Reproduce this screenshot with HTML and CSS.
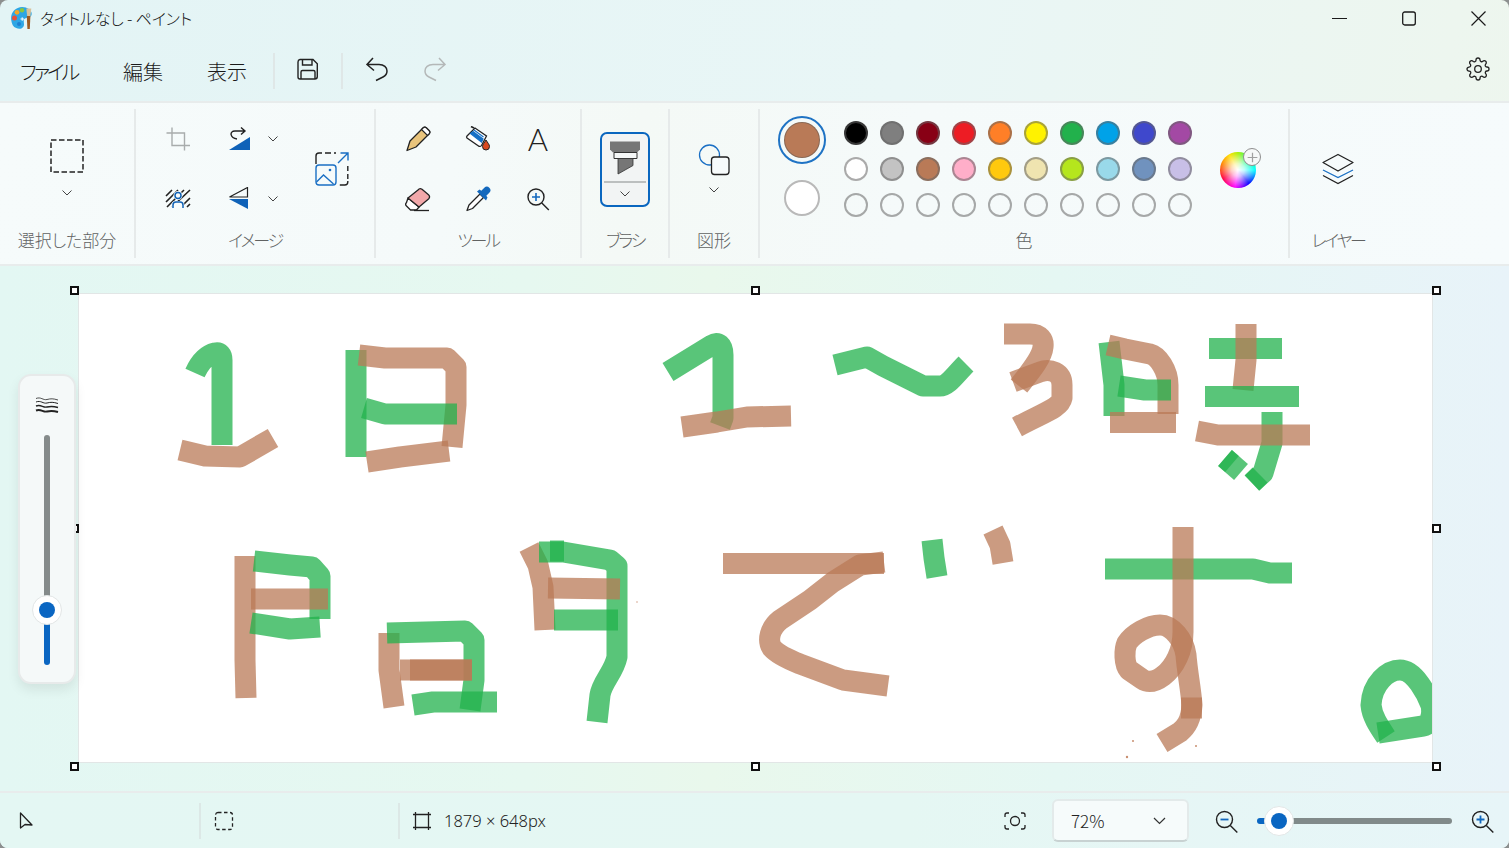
FILE: index.html
```html
<!DOCTYPE html>
<html lang="ja">
<head>
<meta charset="utf-8">
<title>タイトルなし - ペイント</title>
<link rel="stylesheet" href="styles.css">
</head>
<body>
<div class="app">
  <header class="titlebar">
    <svg class="logo" width="22" height="22" viewBox="11 7 22 22">
      <path d="M11.200 20c-1-7 4-13 11-13 5 0 9.500 3 9.500 7 0 4-5.500 3-7.500 5-1.500 2 1 5-1 8-2 2.500-5 2-7 1-3-1-4.500-4-5-8z" fill="#2ea6e4"/>
      <circle cx="14.500" cy="18" r="2.500" fill="#e6503a"/>
      <circle cx="17" cy="12.300" r="2.400" fill="#f6a623"/>
      <circle cx="22" cy="10.300" r="2.200" fill="#8cc63f"/>
      <circle cx="19" cy="24" r="2" fill="#1f7fd0"/>
      <path d="M20.500 19h3.500M22.200 17.300v3.500" stroke="#fff" stroke-width="1"/>
      <path d="M26.800 16h3.600l-.6 13h-2.400z" fill="#9c5a22"/>
      <path d="M26.300 8.500h5l-.9 7.500h-3.200z" fill="#d9c19a"/>
    </svg>
    <span class="title">タイトルなし - ペイント</span>
    <div class="win">
      <svg width="15" height="15" viewBox="0 0 15 15"><path d="M0 7.500h15" stroke="#1a1a1a" stroke-width="1.100"/></svg>
      <svg width="14" height="15" viewBox="0 0 14 15"><rect x=".7" y="1" width="12.600" height="13" rx="2" fill="none" stroke="#1a1a1a" stroke-width="1.300"/></svg>
      <svg width="15" height="15" viewBox="0 0 15 15"><path d="M.5.500l14 14M14.500.500l-14 14" stroke="#1a1a1a" stroke-width="1.200"/></svg>
    </div>
  </header>

  <nav class="menubar">
    <span class="menu m1">ファイル</span>
    <span class="menu m2">編集</span>
    <span class="menu m3">表示</span>
    <i class="vsep s1"></i>
    <svg class="save" width="22" height="22" viewBox="297 58 22 22" fill="none" stroke="#222" stroke-width="1.400"><path d="M300 59.500h13l4.300 4.300v12.700a2.500 2.500 0 0 1-2.500 2.500h-14.800a2 2 0 0 1-2-2v-15a2.500 2.500 0 0 1 2-2.500z"/><path d="M302.500 59.500v5.500h9.500v-5.500M301 79v-7a1.500 1.500 0 0 1 1.500-1.500h11a1.500 1.500 0 0 1 1.500 1.500v7"/></svg>
    <i class="vsep s2"></i>
    <svg class="undo" width="24" height="26" viewBox="365 56 24 26" fill="none" stroke="#222" stroke-width="1.500"><path d="M373 58l-6 6.500 7 6M367 64.500h12c5 0 8 3 8 6.500 0 3-2 5-4 6l-7 3.500"/></svg>
    <svg class="redo" width="24" height="26" viewBox="424 56 24 26" fill="none" stroke="#b4b8b8" stroke-width="1.500"><path d="M439 58l6 6.500-7 6M445 64.500h-12c-5 0-8 3-8 6.500 0 3 2 5 4 6l7 3.500"/></svg>
    <svg class="gear" width="24" height="24" viewBox="0 0 24 24" fill="none" stroke="#222" stroke-width="1.300"><circle cx="12" cy="12" r="3.300"/><path d="M19.400 15a1.650 1.650 0 0 0 .33 1.820l.06.06a2 2 0 0 1 0 2.830 2 2 0 0 1-2.830 0l-.06-.06a1.650 1.650 0 0 0-1.820-.33 1.650 1.650 0 0 0-1 1.510V21a2 2 0 0 1-2 2 2 2 0 0 1-2-2v-.09A1.650 1.650 0 0 0 9 19.400a1.650 1.650 0 0 0-1.820.33l-.06.06a2 2 0 0 1-2.830 0 2 2 0 0 1 0-2.830l.06-.06a1.650 1.650 0 0 0 .33-1.820 1.650 1.650 0 0 0-1.510-1H3a2 2 0 0 1-2-2 2 2 0 0 1 2-2h.09A1.650 1.650 0 0 0 4.600 9a1.650 1.650 0 0 0-.33-1.820l-.06-.06a2 2 0 0 1 0-2.830 2 2 0 0 1 2.830 0l.06.06a1.650 1.650 0 0 0 1.820.33H9a1.650 1.650 0 0 0 1-1.510V3a2 2 0 0 1 2-2 2 2 0 0 1 2 2v.09a1.650 1.650 0 0 0 1 1.510 1.650 1.650 0 0 0 1.820-.33l.06-.06a2 2 0 0 1 2.830 0 2 2 0 0 1 0 2.830l-.06.06a1.650 1.650 0 0 0-.33 1.820V9a1.650 1.650 0 0 0 1.510 1H21a2 2 0 0 1 2 2 2 2 0 0 1-2 2h-.09a1.650 1.650 0 0 0-1.510 1z"/></svg>
  </nav>

  <section class="ribbon">
    <div class="group g1">
      <div class="gbody col col-sel">
        <svg width="34" height="34" viewBox="50 139 34 34"><rect x="51" y="140" width="32" height="32" fill="none" stroke="#222" stroke-width="1.500" stroke-dasharray="5.500 2.500"/></svg>
        <svg class="chev chev-sel" width="10" height="6" viewBox="0 0 10 6"><path d="M.5.500L5 5 9.500.500" fill="none" stroke="#444" stroke-width="1"/></svg>
      </div>
      <div class="label">選択した部分</div>
    </div>

    <div class="group g2">
      <div class="gbody grid-img">
        <div class="cell">
          <svg width="24" height="24" viewBox="166 127 24 24" fill="none" stroke="#a8acac" stroke-width="1.400"><path d="M172 127.500V145.500H190M166.500 133H184.500V150.500"/></svg>
        </div>
        <div class="cell cell-b">
          <svg width="24" height="24" viewBox="229 127 24 24"><path d="M230 150h21v-13z" fill="#0f62b8"/><path d="M238 139c-7-1-8-8-2-8h10M242 127.500l4 3.500-4 3.500" fill="none" stroke="#222" stroke-width="1.400"/></svg>
          <svg class="chev chev-side" width="10" height="6" viewBox="0 0 10 6"><path d="M.5.500L5 5 9.500.500" fill="none" stroke="#444" stroke-width="1"/></svg>
        </div>
        <div class="cell cell-c">
          <svg width="34" height="34" viewBox="315 152 34 34" fill="none"><path d="M316 164v-8a3 3 0 0 1 3-3h3M325 153h6M334 153h2M347.800 166v5M347.800 174v5M347.800 181v1a3 3 0 0 1-3 3h-5" stroke="#222" stroke-width="1.400"/><path d="M338 163l10-10M340.500 153h7.500v7.500" stroke="#1a6fc4" stroke-width="1.400"/><rect x="316" y="165" width="20" height="20" rx="3" stroke="#1a6fc4" stroke-width="1.400"/><path d="M316.500 182l7-7 10 9" stroke="#1a6fc4" stroke-width="1.400"/><circle cx="330" cy="170" r="1.300" fill="#1a6fc4"/></svg>
        </div>
        <div class="cell">
          <svg width="26" height="20" viewBox="165 189 26 20" fill="none"><path d="M166 196l6-6M166 202l12-12M167 207l17-17M172 207l18-17M181 207l9-9M187 207l3-3" stroke="#222" stroke-width="1.600"/><circle cx="178" cy="195.500" r="4.500" fill="#f7fbfb"/><path d="M171.500 208v-3a4 4 0 0 1 4-4h5a4 4 0 0 1 4 4v3z" fill="#f7fbfb"/><circle cx="178" cy="195.500" r="3" fill="none" stroke="#1162b5" stroke-width="1.500"/><path d="M173 208v-3a3 3 0 0 1 3-3h4a3 3 0 0 1 3 3v3" fill="none" stroke="#1162b5" stroke-width="1.500"/></svg>
        </div>
        <div class="cell cell-b">
          <svg width="24" height="24" viewBox="229 187 24 24"><path d="M230.500 197l18-9.500V197z" fill="none" stroke="#222" stroke-width="1.200"/><path d="M230 199h19v10z" fill="#0f62b8"/></svg>
          <svg class="chev chev-side" width="10" height="6" viewBox="0 0 10 6"><path d="M.5.500L5 5 9.500.500" fill="none" stroke="#444" stroke-width="1"/></svg>
        </div>
      </div>
      <div class="label kana">イメージ</div>
    </div>

    <div class="group g3">
      <div class="gbody grid-tools">
        <div class="cell">
          <svg width="26" height="26" viewBox="405 126 26 26"><path d="M407 150.500l3-9.500 13-13a2.500 2.500 0 0 1 3.500 0l2.500 2.500a2.500 2.500 0 0 1 0 3.500l-13 13z" fill="#e9c47c" stroke="#222" stroke-width="1.300" stroke-linejoin="round"/><path d="M423 128a2.500 2.500 0 0 1 3.500 0l2.500 2.500a2.500 2.500 0 0 1 0 3.500l-1.500 1.500-6-6z" fill="#fff" stroke="#222" stroke-width="1.200"/></svg>
        </div>
        <div class="cell">
          <svg width="26" height="26" viewBox="465 126 26 26"><path d="M467 136l8-8 11.500 8-5 9.500a2 2 0 0 1-3 .5l-11.500-8a1.500 1.500 0 0 1 0-2z" fill="#fff" stroke="#222" stroke-width="1.300"/><path d="M470.500 133.500l11 8.500 1.500-3-10-7.500zM474 130l9.500 7" fill="#1770c6" stroke="#1770c6" stroke-width="1.200"/><path d="M474 128l-3-1.500" stroke="#222" stroke-width="1.600"/><path d="M486 140c-1.800 3-3.500 4.500-3.500 6.500a3.500 3.500 0 0 0 7 0c0-2-1.700-3.500-3.500-6.500z" fill="#d8481f" stroke="#222" stroke-width="1"/></svg>
        </div>
        <div class="cell"><span class="letter">A</span></div>
        <div class="cell">
          <svg width="26" height="26" viewBox="405 186 26 26"><path d="M408 198l11 9-2.500 3h-6l-4-4a2.500 2.500 0 0 1 0-3.500z" fill="#fff" stroke="#222" stroke-width="1.300" stroke-linejoin="round"/><path d="M418 190a3 3 0 0 1 4-.8l6.500 5.500a3 3 0 0 1 .3 4L419 207l-11-9z" fill="#f2a8aa" stroke="#222" stroke-width="1.300" stroke-linejoin="round"/><path d="M414 210.500h15" stroke="#222" stroke-width="1.300"/></svg>
        </div>
        <div class="cell">
          <svg width="26" height="26" viewBox="465 186 26 26"><path d="M480 194l-11 11-2 5.500 5.500-2 11-11z" fill="#fff" stroke="#222" stroke-width="1.300" stroke-linejoin="round"/><path d="M477 191.500l9 9 1.500-3-1.200-1.800 3-3a3.500 3.500 0 0 0-5-5l-3 3-1.800-1.200z" fill="#1368bd"/></svg>
        </div>
        <div class="cell">
          <svg width="26" height="26" viewBox="525 186 26 26" fill="none"><circle cx="536" cy="197" r="8" stroke="#222" stroke-width="1.400"/><path d="M532 197h8M536 193v8" stroke="#1368bd" stroke-width="1.600"/><path d="M541.800 203l7 7" stroke="#222" stroke-width="1.400"/></svg>
        </div>
      </div>
      <div class="label kana">ツール</div>
    </div>

    <div class="group g4">
      <div class="gbody col col-brush">
        <div class="brushbtn">
          <svg width="32" height="36" viewBox="608 141 32 36"><path d="M609 141.500h30v8l-3 3h-24l-3-3z" fill="#767676"/><path d="M613 152.500h23v6h-23z" fill="#f5f7f7" stroke="#333" stroke-width="1"/><path d="M617 158.500h15v7l-15 8.500z" fill="#767676" stroke="#333" stroke-width=".8"/></svg>
          <i class="brushline"></i>
          <svg class="chev chev-brush" width="10" height="6" viewBox="0 0 10 6"><path d="M.5.500L5 5 9.500.500" fill="none" stroke="#444" stroke-width="1"/></svg>
        </div>
      </div>
      <div class="label kana">ブラシ</div>
    </div>

    <div class="group g5">
      <div class="gbody col col-shape">
        <svg width="32" height="32" viewBox="698 144 32 32" fill="none"><circle cx="709.500" cy="155" r="10" stroke="#1a6fc4" stroke-width="1.300"/><rect x="711.500" y="157" width="17.500" height="17.500" rx="3" fill="#f7fbfb" stroke="#222" stroke-width="1.300"/></svg>
        <svg class="chev chev-shape" width="10" height="6" viewBox="0 0 10 6"><path d="M.5.500L5 5 9.500.500" fill="none" stroke="#444" stroke-width="1"/></svg>
      </div>
      <div class="label">図形</div>
    </div>

    <div class="group g6">
      <div class="gbody colors">
        <div class="current">
          <div class="ring"><i class="cur-in"></i></div>
          <i class="cur-two"></i>
        </div>
        <div class="swatches">
          <i class="sw c1"></i><i class="sw c2"></i><i class="sw c3"></i><i class="sw c4"></i><i class="sw c5"></i><i class="sw c6"></i><i class="sw c7"></i><i class="sw c8"></i><i class="sw c9"></i><i class="sw c10"></i>
          <i class="sw c11"></i><i class="sw c12"></i><i class="sw c13"></i><i class="sw c14"></i><i class="sw c15"></i><i class="sw c16"></i><i class="sw c17"></i><i class="sw c18"></i><i class="sw c19"></i><i class="sw c20"></i>
          <i class="sw"></i><i class="sw"></i><i class="sw"></i><i class="sw"></i><i class="sw"></i><i class="sw"></i><i class="sw"></i><i class="sw"></i><i class="sw"></i><i class="sw"></i>
        </div>
        <div class="wheel">
          <span class="plus"><svg width="17" height="17" viewBox="0 0 17 17"><path d="M3 8.500h11M8.500 3v11" stroke="#a0a0a0" stroke-width="1.400"/></svg></span>
        </div>
      </div>
      <div class="label">色</div>
    </div>

    <div class="group g7">
      <div class="gbody col col-layer">
        <svg width="32" height="32" viewBox="1322 153 32 32" fill="none"><path d="M1338 154.500l15 8-15 8.500-15-8.500z" stroke="#222" stroke-width="1.300" stroke-linejoin="round"/><path d="M1323 170l15 7.500 15-7.500" stroke="#1a6fc4" stroke-width="1.300"/><path d="M1323 175.500l15 8 15-8" stroke="#222" stroke-width="1.300"/></svg>
      </div>
      <div class="label kana">レイヤー</div>
    </div>
  </section>

  <main class="workspace">
    <div class="canvas">
      <svg class="paint" width="1353" height="468" viewBox="79 294 1353 468">
        <g class="g"><path d="M222 445V360C222 355 220 352 215 353C207 355 200 362 195 373"/></g>
        <g class="b"><path d="M180 450L205 456L240 457L273 438"/></g>
        <g class="g"><path d="M356 350V457"/></g>
        <g class="b"><path d="M359 355L385 358H447L456 367V405L452 447"/><path d="M367 462L400 457 449 451"/></g>
        <g class="g"><path d="M364 408L385 414H457"/></g>

        <g class="g"><path d="M668 372L712 345C718 341 723 345 723 355V418L720 426"/></g>
        <g class="b"><path d="M682 427L717 422 747 417 791 416"/></g>
        <g class="g"><path d="M835 365L867 357 883 366 923 386H940C948 386 955 375 966 364"/></g>

        <g class="b"><path d="M1004 334H1030C1040 334 1044 340 1043 347C1042 358 1030 372 1019 386"/><path d="M1013 382L1040 372C1050 368 1062 372 1062 385V398C1060 408 1045 412 1017 427"/></g>
        <g class="g"><path d="M1109 342L1114 385V416"/></g>
        <g class="b"><path d="M1108 345L1125 349 1150 354C1158 356 1168 370 1168 385V414"/><path d="M1110 422.500H1176"/></g>
        <g class="g"><path d="M1119 386L1145 390H1171"/></g>

        <g class="g"><path d="M1209 348.500H1282"/></g>
        <g class="b"><path d="M1246 324V360L1243 390"/></g>
        <g class="g"><path d="M1205 396.500H1299"/><path d="M1272 412V443L1263 473 1252 483"/><path d="M1252 483L1260 475"/><path d="M1225 458L1241 472"/><path d="M1225 458L1232 464"/></g>
        <g class="b"><path d="M1197 431L1218 435H1310"/></g>

        <g class="b"><path d="M245 556V660L246 698"/></g>
        <g class="g"><path d="M254 561L290 565 312 567 320 576V619"/><path d="M251 623L290 629 320 627"/></g>
        <g class="b"><path d="M251 599H328"/></g>

        <g class="b"><path d="M389 633V670L394 707"/></g>
        <g class="g"><path d="M387 633L465 631 474 640V680L470 710"/><path d="M413 705L433 702H497"/></g>
        <g class="b"><path d="M400 670H472"/><path d="M410 670H472"/></g>

        <g class="b"><path d="M529 547L538 565 543 587 545 630"/></g>
        <g class="g"><path d="M539 552H563L610 560 617 566V657C614 672 602 682 600 695L597 722"/><path d="M550 551H564"/><path d="M554 620H618"/></g>
        <g class="b"><path d="M548 588L620 589"/></g>

        <g class="b"><path d="M723 563.500H884"/><path d="M884 562L860 565 833 582 810 600 780 620C770 628 767 640 772 648C778 655 790 660 800 664L843 680 888 686"/></g>
        <g class="g"><path d="M932 540L934 558 937 577"/></g>
        <g class="b"><path d="M993 530L1000 545 1003 563"/></g>

        <g class="g"><path d="M1105 569H1253L1270 573H1292"/></g>
        <g class="b"><path d="M1183 527V632C1183 650 1175 667 1163 676C1155 682 1148 683 1142 679L1129 670C1124 664 1124 650 1127 643C1133 634 1148 625 1160 625"/><path d="M1160 625C1172 625 1184 640 1186 655C1187 670 1191 690 1192 705C1191 722 1185 728 1180 732L1162 743"/><path d="M1181 708H1202"/></g>

        <g class="g"><path d="M1378 733L1423 726C1430 725 1433 715 1431 705C1427 695 1415 670 1400 670"/><path d="M1400 670C1388 670 1372 683 1371 705C1372 716 1378 725 1386 737"/></g>

        <g class="specks"><circle cx="1133" cy="741" r="1"/><circle cx="1127" cy="757" r="1.200"/><circle cx="1196" cy="746" r="1"/><circle cx="637" cy="602" r=".7"/></g>
      </svg>
      <i class="handle h1"></i><i class="handle h2"></i><i class="handle h3"></i><i class="handle h4"></i><i class="handle h5"></i><i class="handle h6"></i><i class="handle h7"></i><i class="handle h8"></i>
    </div>
    <aside class="sizepanel">
      <svg class="waves" width="24" height="18" viewBox="0 0 24 18" fill="none" stroke="#222"><path d="M1 2.500c5-2 7 2 11 1s6-1 11 .5" stroke-width=".8"/><path d="M1 6c5-2 7 2 11 1s6-1 11 .5" stroke-width="1"/><path d="M1 10c5-2 7 2 11 1s6-1 11 .5" stroke-width="1.400"/><path d="M1 14.500c5-2 7 2 11 1s6-1 11 .5" stroke-width="1.900"/></svg>
      <div class="vtrack">
        <i class="vgray"></i><i class="vblue"></i>
        <span class="thumb"><i></i></span>
      </div>
    </aside>
  </main>

  <footer class="status">
    <div class="st st1">
      <svg width="14" height="18" viewBox="19 812 14 18"><path d="M20.500 813v15l4.500-3.500 7 .5z" fill="none" stroke="#222" stroke-width="1.300" stroke-linejoin="round"/></svg>
    </div>
    <div class="st st2">
      <svg width="20" height="20" viewBox="214 811 20 20"><rect x="215.500" y="812.500" width="17" height="17" rx="2.500" fill="none" stroke="#222" stroke-width="1.300" stroke-dasharray="3.500 2.500"/></svg>
    </div>
    <div class="st st3">
      <svg width="20" height="20" viewBox="412 811 20 20" fill="none" stroke="#222" stroke-width="1.300"><path d="M415.500 812v18M428.500 812v18M413 814.500h18M413 827.500h18"/></svg>
      <span class="dims">1879 × 648px</span>
    </div>
    <div class="st-right">
      <svg width="22" height="18" viewBox="1004 812 22 18" fill="none" stroke="#222" stroke-width="1.300"><path d="M1005 817v-2a2 2 0 0 1 2-2h2M1021 813h2a2 2 0 0 1 2 2v2M1025 825v2a2 2 0 0 1-2 2h-2M1009 829h-2a2 2 0 0 1-2-2v-2"/><circle cx="1015" cy="821" r="4.500"/></svg>
      <div class="combo">
        <span>72%</span>
        <svg width="13" height="8" viewBox="0 0 13 8"><path d="M1 1l5.500 5.500L12 1" fill="none" stroke="#333" stroke-width="1.200"/></svg>
      </div>
      <svg class="zoomout" width="24" height="24" viewBox="1214 809 24 24" fill="none"><circle cx="1224.500" cy="819.500" r="8" stroke="#222" stroke-width="1.400"/><path d="M1220.500 819.500h8" stroke="#1368bd" stroke-width="1.800"/><path d="M1230.300 825.500l7 7" stroke="#222" stroke-width="1.400"/></svg>
      <div class="htrack"><i class="hblue"></i><i class="hgray"></i><span class="thumb hthumb"><i></i></span></div>
      <svg class="zoomin" width="24" height="24" viewBox="1470 809 24 24" fill="none"><circle cx="1480.500" cy="819.500" r="8" stroke="#222" stroke-width="1.400"/><path d="M1476.500 819.500h8M1480.500 815.500v8" stroke="#1368bd" stroke-width="1.800"/><path d="M1486.300 825.500l7 7" stroke="#222" stroke-width="1.400"/></svg>
    </div>
  </footer>
</div>
</body>
</html>
```
FILE: styles.css
```css
* { box-sizing: border-box; }
html, body { margin: 0; padding: 0; height: 100%; background: #8c8f8f; overflow: hidden; }
i { display: block; font-style: normal; }
svg { display: block; flex: none; }
.app {
  width: 1509px; height: 848px; display: flex; flex-direction: column;
  border-radius: 8px; overflow: hidden;
  font-family: "Noto Sans CJK JP", "Noto Sans", sans-serif; font-weight: 300; color: #222;
  font-feature-settings: "palt";
  background: linear-gradient(100deg, #e3f4f5 0%, #e9f6f6 55%, #edf6ef 88%, #eef5ec 100%);
}
.titlebar { height: 36px; display: flex; align-items: center; }
.logo { margin-left: 11px; }
.title { margin-left: 7px; font-size: 16px; line-height: 36px; color: #111; white-space: pre; letter-spacing: -.15px; }
.win { margin-left: auto; display: flex; gap: 55px; padding-right: 23px; }

.menubar { height: 65px; display: flex; align-items: center; padding-left: 20px; }
.menu { font-size: 20px; line-height: 28px; margin-top: 7px; color: #1a1a1a; }
.m1 { width: 103px; letter-spacing: -3px; }
.m2 { width: 84px; }
.m3 { width: 66px; }
.vsep { width: 2px; height: 36px; background: #dfe7e7; margin-top: 5px; }
.save { margin-left: 22px; margin-top: 1px; }
.s2 { margin-left: 22px; }
.undo { margin-left: 22px; margin-top: 1px; }
.redo { margin-left: 35px; margin-top: 1px; }
.gear { margin-left: auto; margin-right: 19px; margin-top: 1px; }

.ribbon {
  height: 165px; display: flex; padding: 6px 0;
  border-top: 2px solid #e8ecec; border-bottom: 2px solid #e8ecec;
  background: linear-gradient(100deg, #f6fbfb 0%, #f5fafa 30%, #f4f9f6 42%, #f5fafa 60%, #f6fbfc 100%);
}
.group { height: 149px; border-right: 2px solid #e6eaea; display: flex; flex-direction: column; }
.g1 { width: 136px; } .g2 { width: 240px; } .g3 { width: 206px; } .g4 { width: 88px; }
.g5 { width: 90px; } .g6 { width: 530px; } .g7 { width: 96px; border-right: 0; }
.gbody { height: 120px; }
.label { height: 24px; text-align: center; font-size: 17px; line-height: 24px; color: #606262; white-space: nowrap; margin-top: -1px; }
.kana { letter-spacing: -2.300px; }
.col { display: flex; flex-direction: column; align-items: center; }
.col-sel { padding-top: 30px; }
.chev-sel { margin-top: 17px; }
.grid-img { display: grid; grid-template-columns: 40px 100px 68px; grid-template-rows: 60px 60px; padding-left: 22px; }
.cell { display: flex; align-items: center; justify-content: center; }
.cell-b { justify-content: flex-start; padding-left: 30px; }
.chev-side { margin-left: 16px; }
.cell-c { grid-column: 3; grid-row: 1 / span 2; }
.grid-tools { display: grid; grid-template-columns: repeat(3, 60px); grid-template-rows: 60px 60px; padding-left: 12px; }
.letter { font-family: "Lato", "Open Sans", sans-serif; font-size: 31px; line-height: 30px; font-weight: 300; color: #222; }
.col-brush { padding-top: 23px; }
.brushbtn {
  width: 50px; height: 75px; border: 2px solid #0a66bf; border-radius: 7px; background: #f2f4f4;
  display: flex; flex-direction: column; align-items: center; padding-top: 7px;
}
.brushline { width: 42px; height: 2px; background: #bcbfbf; margin-top: 4px; }
.chev-brush { margin-top: 8px; }
.col-shape { padding-top: 35px; }
.chev-shape { margin-top: 11px; }
.colors { display: flex; padding-left: 18px; }
.current { width: 48px; padding-top: 7px; display: flex; flex-direction: column; align-items: center; }
.ring { width: 48px; height: 48px; border: 2px solid #1f73c4; border-radius: 50%; padding: 4px; }
.cur-in { width: 36px; height: 36px; border-radius: 50%; background: #b97a57; border: 1px solid rgba(80,80,80,.45); }
.cur-two { width: 36px; height: 36px; border-radius: 50%; background: #fff; border: 2px solid #b9b9b9; margin-top: 16px; }
.swatches { margin-left: 18px; padding-top: 12px; display: grid; grid-template-columns: repeat(10, 24px); grid-auto-rows: 24px; gap: 12px; }
.sw { width: 24px; height: 24px; border-radius: 50%; border: 2px solid rgba(100,100,100,.55); }
.c1 { background: #000; } .c2 { background: #7f7f7f; } .c3 { background: #880015; } .c4 { background: #ed1c24; } .c5 { background: #ff7f27; }
.c6 { background: #fff200; } .c7 { background: #22b14c; } .c8 { background: #00a2e8; } .c9 { background: #3f48cc; } .c10 { background: #a349a4; }
.c11 { background: #fff; } .c12 { background: #c3c3c3; } .c13 { background: #b97a57; } .c14 { background: #ffaec9; } .c15 { background: #ffc90e; }
.c16 { background: #efe4b0; } .c17 { background: #b5e61d; } .c18 { background: #99d9ea; } .c19 { background: #7092be; } .c20 { background: #c8bfe7; }
.wheel {
  position: relative; width: 36px; height: 36px; margin: 43px 0 0 28px; border-radius: 50%;
  background:
    radial-gradient(circle, #fff 0%, rgba(255,255,255,.75) 25%, rgba(255,255,255,0) 70%),
    conic-gradient(from 0deg, #a8f000, #00ff80 45deg, #00ffff 90deg, #0000ff 140deg, #ff00ff 190deg, #ff0040 240deg, #ff8000 290deg, #ffe000 330deg, #a8f000);
}
.plus { position: absolute; right: -5px; top: -4px; width: 18px; height: 18px; border-radius: 50%; background: #f6f8f8; border: 1.5px solid #8e8e8e; display: flex; align-items: center; justify-content: center; }
.plus svg { width: 15px; height: 15px; }
.col-layer { padding-top: 44px; }

.workspace {
  position: relative; flex: 1; padding: 28px 0 0 79px;
  background: linear-gradient(90deg, #e3f7f3 0%, #e6f8f0 35%, #e9f8ec 47%, #e5f7f3 70%, #e8f3f9 100%);
}
.canvas { position: relative; width: 1353px; height: 468px; background: #fff; box-shadow: 0 0 0 1px #e2e6e6; }
.paint { position: absolute; inset: 0; }
.paint path { fill: none; stroke-width: 21; stroke-linejoin: round; stroke-linecap: butt; }
.g path { stroke: #22b14c; stroke-opacity: .75; }
.b path { stroke: #b97a57; stroke-opacity: .75; }
.specks circle { fill: #c98f70; }
.handle { position: absolute; width: 9px; height: 9px; background: #fff; border: 2px solid #111; }
.h1 { left: -9.5px; top: -8.500px; } .h2 { left: 671.500px; top: -8.500px; } .h3 { left: 1352.500px; top: -8.500px; }
.h4 { left: 1352.500px; top: 229.500px; } .h5 { left: 1352.500px; top: 467.500px; } .h6 { left: 671.500px; top: 467.500px; }
.h7 { left: -9.5px; top: 467.500px; } .h8 { left: -9.5px; top: 229.500px; }
.sizepanel {
  position: absolute; left: 18px; top: 108px; width: 58px; height: 310px; border-radius: 13px;
  background: #f5f9f9; border: 2px solid #e7eaea; box-shadow: 0 6px 12px rgba(0,0,0,.08);
  display: flex; flex-direction: column; align-items: center; padding-top: 20px; z-index: 2;
}
.waves { width: 24px; height: 18px; }
.vtrack { position: relative; width: 6px; height: 230px; margin-top: 21px; }
.vgray { position: absolute; top: 0; left: 0; width: 6px; height: 165px; background: #858b8b; border-radius: 3px 3px 0 0; }
.vblue { position: absolute; bottom: 0; left: 0; width: 6px; height: 50px; background: #0a66c2; border-radius: 0 0 3px 3px; }
.thumb { position: absolute; left: -12px; top: 160px; width: 30px; height: 30px; border-radius: 50%; background: #fff; border: 1px solid #e2e6e6; display: flex; align-items: center; justify-content: center; }
.thumb i { width: 16px; height: 16px; border-radius: 50%; background: #0a66c2; }

.status { height: 57px; border-top: 2px solid #e8ecec; display: flex; align-items: center; background: linear-gradient(90deg, #e4f7f3 0%, #e5f7f3 60%, #e7f5f8 100%); }
.st { height: 36px; display: flex; align-items: center; }
.st1 { width: 201px; padding-left: 19px; border-right: 2px solid #dce8e6; }
.st2 { width: 199px; padding-left: 13px; border-right: 2px solid #dce8e6; }
.st3 { padding-left: 12px; }
.dims { margin-left: 12px; font-family: "Noto Sans", sans-serif; font-size: 16.5px; line-height: 36px; white-space: nowrap; }
.st-right { margin-left: auto; display: flex; align-items: center; }
.combo {
  width: 137px; height: 43px; margin-left: 26px; padding: 0 21px 0 17px; border-radius: 6px;
  background: #f6fbfb; border: 2px solid #e3eaea; border-bottom-color: #c8d2d2;
  display: flex; align-items: center; justify-content: space-between; font-size: 17px;
}
.zoomout { margin-left: 25px; }
.htrack { position: relative; width: 195px; height: 6px; margin-left: 19px; }
.hblue { position: absolute; left: 0; top: 0; width: 14px; height: 6px; background: #0a66c2; border-radius: 3px 0 0 3px; }
.hgray { position: absolute; left: 30px; top: 0; right: 0; height: 6px; background: #818a8a; border-radius: 0 3px 3px 0; }
.hthumb { left: 7px; top: -12px; }
.zoomin { margin-left: 18px; margin-right: 15px; }
```
